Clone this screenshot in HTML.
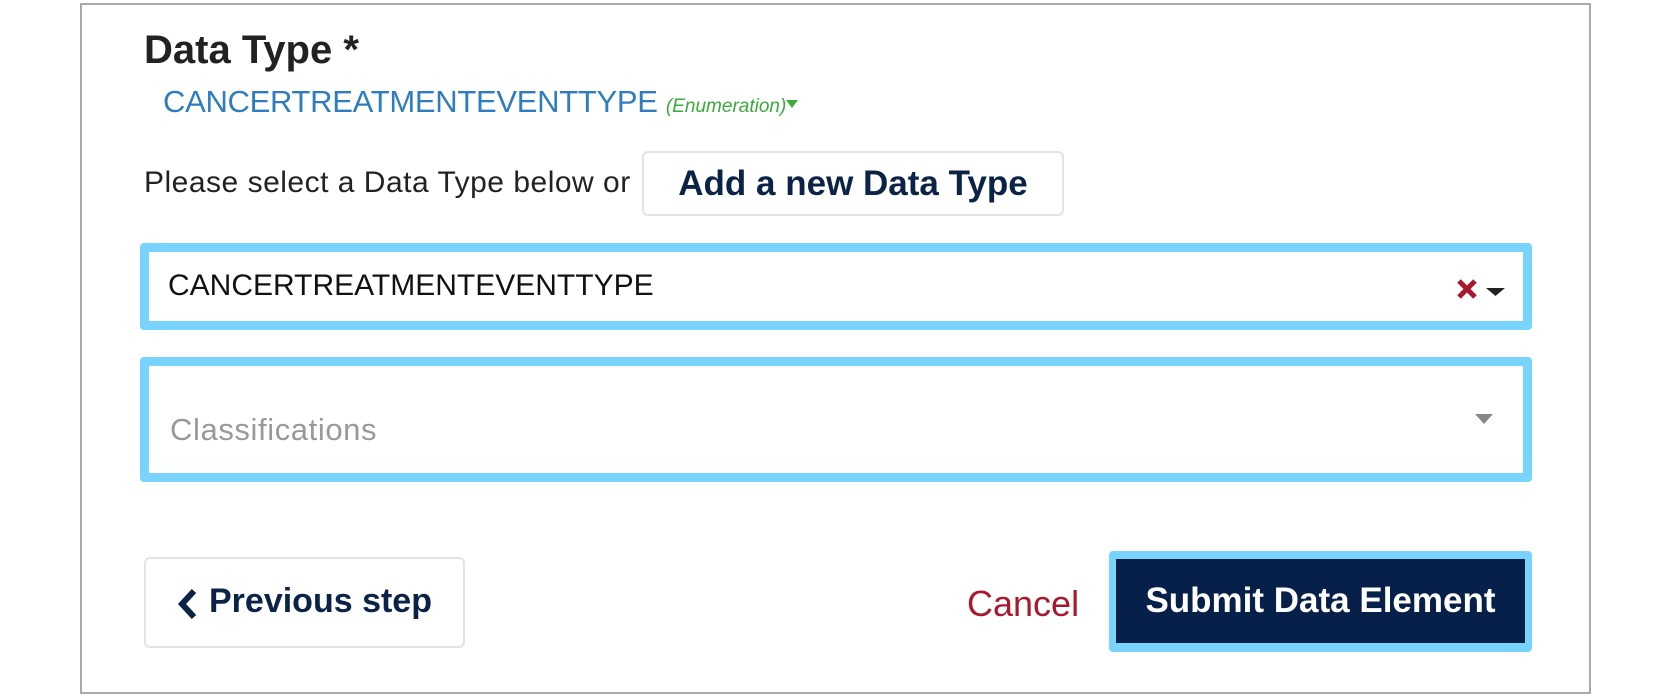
<!DOCTYPE html>
<html><head><meta charset="utf-8"><style>
*{box-sizing:border-box;margin:0;padding:0}
body{width:1674px;height:695px;background:#fff;position:relative;overflow:hidden;font-family:"Liberation Sans",sans-serif}
.frame{position:absolute;left:80px;top:3px;width:1511px;height:691px;border:2px solid #aaa}
.a{position:absolute;white-space:nowrap}
</style></head><body>
<div class="frame"></div>
<div class="a" style="left:144px;top:28px;font-size:40px;font-weight:bold;color:#222">Data Type *</div>
<div class="a" style="left:163px;top:84px;font-size:31px;color:#2f7dc0;letter-spacing:-0.3px">CANCERTREATMENTEVENTTYPE <span style="font-size:19px;font-style:italic;color:#3caa3c;letter-spacing:0">(Enumeration)</span><svg width="12" height="8" style="vertical-align:4px"><path d="M0 0H12L6 8Z" fill="#3caa3c"/></svg></div>
<div class="a" style="left:144px;top:166px;font-size:30px;color:#222;letter-spacing:0.5px">Please select a Data Type below or</div>
<div class="a" style="left:642px;top:151px;width:422px;height:65px;border:2px solid #e3e3e3;border-radius:6px;font-size:35px;font-weight:bold;color:#0a2346;text-align:center;line-height:61px">Add a new Data Type</div>
<div class="a" style="left:140px;top:243px;width:1392px;height:87px;border:9px solid #78d4fc;border-radius:4px"></div>
<div class="a" style="left:168px;top:269px;font-size:30px;color:#111">CANCERTREATMENTEVENTTYPE</div>
<svg class="a" style="left:1456px;top:278px" width="52" height="22"><path d="M3 3L19 19M19 3L3 19" stroke="#a8182f" stroke-width="5"/><path d="M30 10H49L39.5 18Z" fill="#222"/></svg>
<div class="a" style="left:140px;top:357px;width:1392px;height:125px;border:9px solid #78d4fc;border-radius:4px"></div>
<div class="a" style="left:170px;top:412px;font-size:31px;color:#999;letter-spacing:0.6px">Classifications</div>
<svg class="a" style="left:1475px;top:414px" width="18" height="11"><path d="M0 0H18L9 10Z" fill="#888"/></svg>
<div class="a" style="left:144px;top:557px;width:321px;height:91px;border:2px solid #e3e3e3;border-radius:6px"></div>
<svg class="a" style="left:176px;top:587px" width="24" height="34"><path d="M18 4L6 17L18 30" fill="none" stroke="#0a2346" stroke-width="6"/></svg>
<div class="a" style="left:209px;top:582px;font-size:34px;font-weight:bold;color:#0a2346">Previous step</div>
<div class="a" style="left:967px;top:583px;font-size:36px;color:#a8182f">Cancel</div>
<div class="a" style="left:1109px;top:551px;width:423px;height:101px;border:7px solid #78d4fc;border-top-width:8px;border-bottom-width:9px;border-radius:4px;background:#06204a;color:#fff;font-size:35px;font-weight:bold;text-align:center;line-height:84px">Submit Data Element</div>
</body></html>
